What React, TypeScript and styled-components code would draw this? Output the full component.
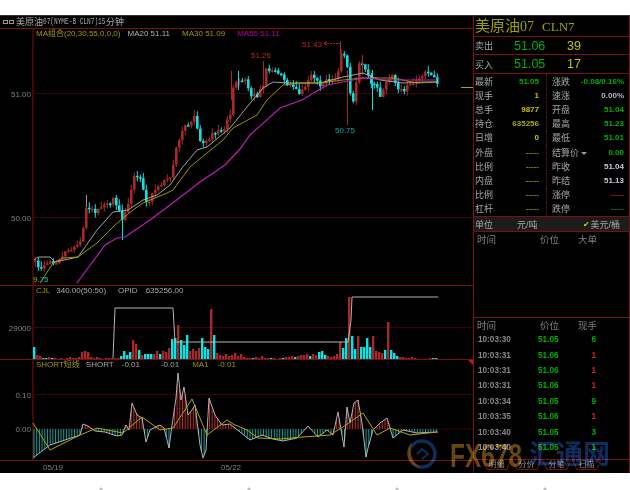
import React from "react";
import styled, { createGlobalStyle } from "styled-components";

const sans = `"Liberation Sans", "Noto Sans CJK SC", sans-serif`;
const lineRed = "#7c1010";
const dimRed = "#3c0505";
const olive = "#9c9c00";
const gray = "#a8a8a8";
const green = "#00b000";
const yellow = "#c4c400";

type Pt = [number, number];

const pricePath: Pt[] = [
  [34, 262], [40, 268], [45, 265], [52, 262], [60, 260], [65, 252], [72, 250], [80, 243],
  [82, 230], [84, 208], [95, 212], [105, 205], [112, 200], [118, 211], [122, 221], [128, 202],
  [132, 178], [140, 180], [146, 205], [155, 188], [165, 178], [170, 176], [174, 150], [180, 132],
  [193, 118], [200, 145], [210, 135], [222, 130], [229, 115], [231, 88], [236, 80], [245, 80],
  [250, 95], [255, 97], [262, 85], [263, 67], [270, 72], [275, 70], [280, 75], [285, 85],
  [292, 85], [298, 95], [305, 85], [310, 75], [318, 85], [325, 80], [335, 80], [340, 52],
  [345, 55], [348, 90], [352, 100], [358, 65], [362, 62], [368, 80], [375, 85], [380, 100],
  [385, 80], [392, 76], [395, 88], [402, 92], [408, 85], [415, 80], [422, 76], [428, 70],
  [435, 82], [438, 86],
];

const ma20: Pt[] = [
  [34, 260], [38, 257], [50, 257], [55, 262], [78, 257], [97, 230], [113, 212], [128, 210],
  [143, 200], [157, 195], [170, 185], [182, 168], [197, 150], [207, 147], [230, 128], [247, 107],
  [263, 88], [273, 82], [287, 83], [320, 83], [343, 77], [363, 73], [380, 80], [403, 83],
  [427, 82], [437, 82],
];

const ma30: Pt[] = [
  [40, 283], [53, 263], [63, 258], [78, 257], [97, 243], [115, 225], [133, 210], [143, 203],
  [167, 193], [173, 190], [190, 167], [207, 153], [223, 140], [233, 128], [257, 115], [267, 100],
  [283, 85], [300, 83], [320, 83], [343, 80], [363, 78], [393, 78], [417, 83], [437, 82],
];

const ma55: Pt[] = [
  [77, 283], [105, 245], [117, 238], [125, 237], [150, 220], [170, 205], [200, 182], [225, 165],
  [240, 149], [250, 135], [280, 108], [302, 100], [327, 85], [343, 82], [363, 78], [387, 80],
  [410, 80], [437, 80],
];

const macd: Pt[] = [
  [33, 458], [42, 451], [50, 445], [80, 435], [83, 424], [88, 426], [95, 431], [105, 432],
  [117, 436], [122, 435], [126, 425], [129, 430], [132, 403], [137, 415], [142, 418], [146, 442],
  [150, 430], [155, 427], [160, 425], [164, 428], [169, 448], [172, 425], [176, 398], [178, 373],
  [181, 400], [184, 387], [188, 415], [192, 410], [195, 405], [200, 445], [203, 458], [206, 450],
  [209, 398], [215, 415], [222, 425], [230, 424], [250, 440], [262, 435], [273, 439], [283, 441],
  [297, 438], [308, 426], [318, 437], [327, 430], [333, 435], [338, 412], [344, 447], [347, 407],
  [350, 423], [354, 403], [358, 400], [362, 423], [366, 457], [368, 448], [373, 430], [380, 423],
  [387, 418], [393, 438], [403, 430], [417, 433], [438, 432],
];

const macdSignal: Pt[] = [
  [33, 423], [50, 450], [80, 435], [97, 428], [123, 433], [142, 417], [160, 430], [173, 428],
  [192, 399], [207, 435], [227, 420], [233, 424], [247, 430], [258, 438], [280, 439], [303, 437],
  [330, 435], [343, 427], [363, 413], [377, 435], [390, 428], [410, 435], [437, 432],
];

// volume per 3px slot from x=33: positive is a red bar, negative a cyan one
const volumes = [
  -12, 4, 3, -1, -1, 2, -1, 1, 0, 1,
  0, 1, 2, 1, 1, 2, 7, 8, 7, 2,
  1, 2, 1, 0, 1, 1, 1, 1, 1, -3,
  -8, -4, -7, 19, 15, -9, 4, -5, -5, -5,
  5, 8, -5, 8, 7, 11, -20, -21, 34, -19,
  -14, -24, 8, 10, 8, 11, -21, -12, -10, 50,
  -24, 6, 4, 3, 5, 3, 4, 6, 3, 5,
  2, 1, 1, -1, 2, 1, 3, 1, 1, -1,
  1, 0, 1, -1, 2, 2, 3, -2, 3, 4,
  4, 5, -3, 5, 4, -7, -8, -4, 3, 2,
  3, 5, 17, -11, -21, 62, -23, -10, 23, -12,
  -12, -21, -12, 23, 8, 7, 6, -9, 37, -9,
  -6, -3, 2, 2, 1, 1, 2, 1, 0, 0,
  0, 0, 1, -1, -1, 0,
];

const wicks: [number, number, number, string][] = [
  [340, 41, 70, "#a82828"],
  [347, 70, 125, "#a82828"],
  [263, 61, 80, "#a82828"],
  [231, 71, 100, "#a82828"],
  [238, 71, 90, "#10e0e0"],
  [122, 212, 240, "#10e0e0"],
  [86, 195, 207, "#999999"],
  [372, 70, 110, "#10e0e0"],
  [362, 55, 75, "#a82828"],
];

const stats: [string, string, string, string, string, string][] = [
  ["最新", "51.05", green, "涨跌", "-0.08/0.16%", green],
  ["现手", "1", yellow, "速涨", "0.00%", "#b8b8d0"],
  ["总手", "9877", yellow, "开盘", "51.04", green],
  ["持仓", "635256", "#a8a800", "最高", "51.23", green],
  ["日增", "0", yellow, "最低", "51.01", green],
  ["外盘", "-----", "#8c8c00", "结算价", "0.00", green],
  ["比例", "-----", "#8c8c00", "昨收", "51.04", "#c8c8d8"],
  ["内盘", "-----", "#8c8c00", "昨结", "51.13", "#c8c8d8"],
  ["比例", "-----", "#8c8c00", "涨停", "-----", "#b02020"],
  ["杠杆", "-----", "#8c8c00", "跌停", "-----", "#008c00"],
];

const trades: [string, string, string, string][] = [
  ["10:03:30", "51.05", "6", green],
  ["10:03:31", "51.06", "1", "#d02020"],
  ["10:03:31", "51.06", "1", "#d02020"],
  ["10:03:31", "51.06", "1", "#d02020"],
  ["10:03:34", "51.05", "9", green],
  ["10:03:35", "51.06", "1", "#d02020"],
  ["10:03:40", "51.05", "3", green],
  ["10:03:40", "51.05", "1", green],
];

const interp = (pts: Pt[], x: number) => {
  for (let i = 1; i < pts.length; i++) {
    if (x <= pts[i][0]) {
      const [x0, y0] = pts[i - 1];
      const [x1, y1] = pts[i];
      return y0 + ((y1 - y0) * (x - x0)) / (x1 - x0 || 1);
    }
  }
  return pts[pts.length - 1][1];
};

const noise = (n: number) => {
  const v = Math.sin(n * 12.9898) * 43758.5453;
  return v - Math.floor(v);
};

const line = (pts: Pt[]) => pts.map((p) => p.join(",")).join(" ");

const buildCandles = () => {
  const out = [];
  let prev = pricePath[0][1];
  for (let x = 34; x <= 438; x += 3) {
    const close = interp(pricePath, x) + (noise(x) - 0.5) * 5;
    const up = close < prev;
    out.push({
      x,
      top: Math.min(prev, close),
      bottom: Math.max(prev, close),
      high: Math.min(prev, close) - noise(x + 1) * 6,
      low: Math.max(prev, close) + noise(x + 2) * 5,
      color: up ? "#a82828" : "#10e0e0",
    });
    prev = close;
  }
  return out;
};

const GlobalStyle = createGlobalStyle`
  html, body {
    margin: 0;
    padding: 0;
    background: #fff;
  }
  * {
    box-sizing: border-box;
  }
`;

const Page = styled.div`
  width: 630px;
  height: 490px;
  overflow: hidden;
  display: flex;
  flex-direction: column;
  font-family: ${sans};
`;

const TopGap = styled.div`
  height: 15px;
  background: #fff;
`;

const Terminal = styled.div`
  position: relative;
  height: 458px;
  display: flex;
  background: #000;
  border-top: 1px solid #333;
  overflow: hidden;
`;

const ChartColumn = styled.div`
  width: 473px;
  display: flex;
  flex-direction: column;
`;

const TitleBar = styled.div`
  height: 13px;
  display: flex;
  align-items: center;
  padding-left: 3px;
  color: ${gray};
  border-bottom: 1px solid ${lineRed};
  line-height: 12px;
`;

const WindowIcon = styled.span`
  width: 5px;
  height: 4px;
  margin-right: 1px;
  border: 1px solid #999;

  & + & {
    margin-right: 2px;
  }
`;

const TitleName = styled.span`
  font-size: 9px;
`;

const TitleCode = styled.span`
  width: 63px;
  font-family: "Liberation Mono", monospace;
  font-size: 9px;
  white-space: nowrap;
  transform: scaleX(0.68);
  transform-origin: left center;
`;

const Pane = styled.div<{ $height: number; $line?: boolean }>`
  position: relative;
  height: ${(p) => p.$height}px;
  border-bottom: ${(p) => (p.$line ? `1px solid ${lineRed}` : "none")};
`;

const Legend = styled.div`
  position: absolute;
  top: 0;
  left: 36px;
  display: flex;
  height: 10px;
  align-items: center;
  font-size: 8px;
  line-height: 10px;
  white-space: nowrap;
`;

const LegendItem = styled.span<{ $color: string; $left?: number }>`
  color: ${(p) => p.$color};
  margin-left: ${(p) => p.$left ?? 0}px;
`;

const ChartSvg = styled.svg`
  display: block;
  filter: blur(0.3px);

  text {
    font-family: ${sans};
    font-size: 8px;
  }
`;

const DateAxis = styled.div`
  flex: 1;
  display: flex;
  align-items: center;
  padding-left: 43px;
  color: #808080;
  font-size: 8px;
`;

const DateLabel = styled.span<{ $left?: number }>`
  margin-left: ${(p) => p.$left ?? 0}px;
`;

const SidePanel = styled.div`
  width: 157px;
  display: flex;
  flex-direction: column;
  border-left: 1px solid ${lineRed};
  border-right: 1px solid ${lineRed};
`;

const PanelTitle = styled.div`
  height: 20px;
  display: flex;
  align-items: baseline;
  padding-left: 1px;
  color: #a0a000;
  font-family: "Liberation Serif", "Noto Sans CJK SC", serif;
  font-size: 15px;
  line-height: 20px;
  white-space: pre;
`;

const TitleLatin = styled.span<{ $size: number; $left?: number }>`
  font-size: ${(p) => p.$size}px;
  margin-left: ${(p) => p.$left ?? 0}px;
`;

const QuoteRow = styled.div<{ $height: number }>`
  height: ${(p) => p.$height}px;
  display: flex;
  align-items: center;
  padding-left: 1px;
  border-top: 1px solid ${lineRed};
`;

const QuoteLabel = styled.span`
  width: 39px;
  color: ${gray};
  font-size: 9px;
`;

const QuotePrice = styled.span`
  width: 53px;
  color: ${green};
  font-size: 12.5px;
`;

const QuoteSize = styled.span`
  color: ${yellow};
  font-size: 12.5px;
`;

const StatsBlock = styled.div`
  height: 143px;
  display: grid;
  grid-template-rows: repeat(10, 1fr);
  border-top: 1px solid ${lineRed};
`;

const StatsRow = styled.div`
  display: grid;
  grid-template-columns: 73px 1fr;
`;

const StatCell = styled.div<{ $side: "left" | "right" }>`
  display: flex;
  align-items: center;
  justify-content: space-between;
  padding: ${(p) => (p.$side === "left" ? "0 7px 0 1px" : "0 5px 0 5px")};
  border-right: ${(p) => (p.$side === "left" ? `1px dotted ${lineRed}` : "none")};
`;

const StatLabel = styled.span`
  color: ${gray};
  font-size: 9px;
`;

const Caret = styled.span`
  width: 0;
  height: 0;
  display: inline-block;
  margin-left: 2px;
  vertical-align: middle;
  border-left: 3px solid transparent;
  border-right: 3px solid transparent;
  border-top: 3px solid #999;
`;

const StatValue = styled.span<{ $color: string }>`
  color: ${(p) => p.$color};
  font-size: 8px;
  font-weight: 700;
`;

const UnitRow = styled.div`
  height: 16px;
  display: flex;
  align-items: center;
  padding: 0 5px 0 1px;
  background: #1c1c1c;
  color: ${gray};
  font-size: 9px;
  border-top: 1px solid ${lineRed};
  border-bottom: 1px solid ${lineRed};
`;

const UnitOption = styled.span<{ $left: number }>`
  margin-left: ${(p) => p.$left}px;
`;

const CheckMark = styled.span`
  margin-left: 45px;
  margin-right: 1px;
  color: ${yellow};
  font-size: 8px;
`;

const TapeBox = styled.div<{ $height: number }>`
  height: ${(p) => p.$height}px;
  border-bottom: 1px solid ${lineRed};
`;

const TapeHeader = styled.div`
  display: grid;
  grid-template-columns: 63px 38px 38px;
  height: 14px;
  align-items: center;
  padding-left: 3px;
  color: #808080;
  font-size: 9.5px;
`;

const TapeRow = styled.div`
  display: grid;
  grid-template-columns: 60px 36px 22px;
  height: 15.4px;
  align-items: center;
  padding-left: 4px;
  font-size: 8.2px;
  font-weight: 700;
`;

const TapeTime = styled.span`
  color: #888;
`;

const TapePrice = styled.span`
  color: ${green};
`;

const TapeSize = styled.span<{ $color: string }>`
  color: ${(p) => p.$color};
  text-align: right;
`;

const TabBar = styled.div`
  height: 12px;
  display: flex;
  padding-left: 8px;
  gap: 1px;
`;

const Tab = styled.div`
  position: relative;
  width: 29px;
  height: 11px;
  color: #8a8a8a;
  font-size: 8px;
  line-height: 10px;
  text-align: center;
`;

const TabEdge = styled.svg`
  position: absolute;
  left: 0;
  top: 0;
`;

const Watermark = styled.div`
  position: absolute;
  left: 404px;
  bottom: 1px;
  display: flex;
  align-items: center;
  mix-blend-mode: screen;
  pointer-events: none;
`;

const MarkBrand = styled.span`
  width: 79px;
  margin-left: 12px;
  color: #644810;
  font-size: 34px;
  font-weight: 700;
  line-height: 34px;
  transform: scaleX(0.72);
  transform-origin: left center;
`;

const MarkName = styled.span`
  color: #0e2c5c;
  font-size: 27px;
  font-weight: 700;
  line-height: 34px;
`;

const FootMarks = styled.div`
  flex: 1;
  display: flex;
  align-items: flex-end;
  padding: 0 0 0 99px;
  gap: 144px;
  background: #fff;
`;

const FootMark = styled.span`
  width: 0;
  height: 0;
  border-left: 2px solid transparent;
  border-right: 2px solid transparent;
  border-bottom: 3px solid #bbb;
`;

const PricePane = () => {
  const candles = buildCandles();
  return (
    <ChartSvg width={473} height={256} viewBox="0 29 473 256">
      <line x1={33} y1={29} x2={33} y2={285} stroke={lineRed} />
      <line x1={34} y1={93.5} x2={473} y2={93.5} stroke={dimRed} />
      <line x1={34} y1={217.5} x2={473} y2={217.5} stroke={dimRed} />
      <text x={31} y={96.5} textAnchor="end" fill="#808080">51.00</text>
      <text x={31} y={220.5} textAnchor="end" fill="#808080">50.00</text>
      {candles.map((c) => (
        <g key={c.x} fill={c.color} stroke="none">
          <rect x={c.x + 0.8} y={c.high} width={1} height={c.low - c.high} />
          <rect x={c.x} y={c.top} width={2.6} height={Math.max(1.5, c.bottom - c.top)} />
        </g>
      ))}
      {wicks.map(([x, y1, y2, color]) => (
        <line key={x} x1={x + 0.5} y1={y1} x2={x + 0.5} y2={y2} stroke={color} />
      ))}
      <polyline points={line(ma20)} fill="none" stroke="#b4b4b4" strokeWidth={0.9} />
      <polyline points={line(ma30)} fill="none" stroke="#a8a400" strokeWidth={0.9} />
      <polyline points={line(ma55)} fill="none" stroke="#b820b8" strokeWidth={1.2} />
      <text x={251} y={58} fill="#c02828">51.26</text>
      <text x={302} y={47} fill="#c02828">51.43</text>
      <line x1={324} y1={43.5} x2={340} y2={43.5} stroke="#a82828" strokeDasharray="2 1" />
      <path d="M327 41.5 L324 43.5 L327 45.5" fill="none" stroke="#a82828" />
      <text x={335} y={133} fill="#10a8a8">50.75</text>
      <text x={33} y={282}>
        <tspan fill="#a8b000">9.</tspan>
        <tspan fill="#10c8c8">75</tspan>
      </text>
      <line x1={461} y1={87.5} x2={473} y2={87.5} stroke="#a8a400" />
    </ChartSvg>
  );
};

const VolumePane = () => (
  <ChartSvg width={473} height={73} viewBox="0 286 473 73">
    <line x1={33} y1={286} x2={33} y2={359} stroke={lineRed} />
    <line x1={34} y1={327.5} x2={473} y2={327.5} stroke={dimRed} />
    <text x={31} y={330.5} textAnchor="end" fill="#808080">29000</text>
    {volumes.map((v, i) =>
      v === 0 ? null : (
        <rect
          key={i}
          x={33 + i * 3}
          y={359 - Math.abs(v)}
          width={2.4}
          height={Math.abs(v)}
          fill={v > 0 ? "#a82828" : "#00e8e8"}
        />
      )
    )}
    <polyline
      points="113,358 115,308 173,308 175,342 348,342 351,320 352,297 438,297"
      fill="none"
      stroke="#b4b4b4"
    />
  </ChartSvg>
);

const MacdPane = () => {
  const bars = [];
  for (let x = 34; x <= 438; x += 2.7) {
    bars.push({ x, y: interp(macd, x) });
  }
  return (
    <ChartSvg width={473} height={100} viewBox="0 360 473 100">
      <line x1={33} y1={360} x2={33} y2={460} stroke={lineRed} />
      <line x1={34} y1={394.5} x2={473} y2={394.5} stroke={dimRed} />
      <line x1={34} y1={429} x2={473} y2={429} stroke={dimRed} />
      <text x={31} y={397.5} textAnchor="end" fill="#808080">0.10</text>
      <text x={31} y={432} textAnchor="end" fill="#808080">0.00</text>
      {bars.map((b) => (
        <line
          key={b.x}
          x1={b.x}
          y1={429}
          x2={b.x}
          y2={b.y}
          stroke={b.y < 429 ? "#b82c2c" : "#10a0a0"}
        />
      ))}
      <polyline points={line(macd)} fill="none" stroke="#c4c4c4" strokeWidth={0.9} />
      <polyline points={line(macdSignal)} fill="none" stroke="#b0a800" />
      <path d="M468 360 H473 V365 Z" fill="#c01818" />
    </ChartSvg>
  );
};

const App = () => {
  return (
    <Page>
      <GlobalStyle />
      <TopGap />
      <Terminal>
        <ChartColumn>
          <TitleBar>
            <WindowIcon />
            <WindowIcon />
            <TitleName>美原油</TitleName>
            <TitleCode>07(NYME-B CLN7)15</TitleCode>
            <TitleName>分钟</TitleName>
          </TitleBar>
          <Pane $height={257} $line>
            <PricePane />
            <Legend>
              <LegendItem $color={olive}>MA组合(20,30,55,0,0,0)</LegendItem>
              <LegendItem $color="#b4b4b4" $left={7}>MA20 51.11</LegendItem>
              <LegendItem $color={olive} $left={12}>MA30 51.09</LegendItem>
              <LegendItem $color="#b000b0" $left={12}>MA55 51.11</LegendItem>
            </Legend>
          </Pane>
          <Pane $height={74} $line>
            <VolumePane />
            <Legend>
              <LegendItem $color={olive}>CJL</LegendItem>
              <LegendItem $color={gray} $left={6}>340.00(50:50)</LegendItem>
              <LegendItem $color={gray} $left={12}>OPID</LegendItem>
              <LegendItem $color={gray} $left={8}>635256.00</LegendItem>
            </Legend>
          </Pane>
          <Pane $height={101} $line>
            <MacdPane />
            <Legend>
              <LegendItem $color={olive}>SHORT短线</LegendItem>
              <LegendItem $color={gray} $left={6}>SHORT</LegendItem>
              <LegendItem $color={gray} $left={8}>-0.01</LegendItem>
              <LegendItem $color={gray} $left={21}>-0.01</LegendItem>
              <LegendItem $color={olive} $left={13}>MA1</LegendItem>
              <LegendItem $color={olive} $left={9}>-0.01</LegendItem>
            </Legend>
          </Pane>
          <DateAxis>
            <DateLabel>05/19</DateLabel>
            <DateLabel $left={158}>05/22</DateLabel>
          </DateAxis>
        </ChartColumn>
        <SidePanel>
          <PanelTitle>
            美原油
            <TitleLatin $size={14}>07</TitleLatin>
            <TitleLatin $size={13} $left={8}>CLN7</TitleLatin>
          </PanelTitle>
          <QuoteRow $height={18}>
            <QuoteLabel>卖出</QuoteLabel>
            <QuotePrice>51.06</QuotePrice>
            <QuoteSize>39</QuoteSize>
          </QuoteRow>
          <QuoteRow $height={19}>
            <QuoteLabel>买入</QuoteLabel>
            <QuotePrice>51.05</QuotePrice>
            <QuoteSize>17</QuoteSize>
          </QuoteRow>
          <StatsBlock>
            {stats.map(([l, lv, lc, r, rv, rc], i) => (
              <StatsRow key={i}>
                <StatCell $side="left">
                  <StatLabel>{l}</StatLabel>
                  <StatValue $color={lc}>{lv}</StatValue>
                </StatCell>
                <StatCell $side="right">
                  <StatLabel>
                    {r}
                    {r === "结算价" && <Caret />}
                  </StatLabel>
                  <StatValue $color={rc}>{rv}</StatValue>
                </StatCell>
              </StatsRow>
            ))}
          </StatsBlock>
          <UnitRow>
            <span>单位</span>
            <UnitOption $left={24}>元/吨</UnitOption>
            <CheckMark>✔</CheckMark>
            <span>美元/桶</span>
          </UnitRow>
          <TapeBox $height={86}>
            <TapeHeader>
              <span>时间</span>
              <span>价位</span>
              <span>大单</span>
            </TapeHeader>
          </TapeBox>
          <TapeBox $height={142}>
            <TapeHeader>
              <span>时间</span>
              <span>价位</span>
              <span>现手</span>
            </TapeHeader>
            {trades.map(([time, price, size, color], i) => (
              <TapeRow key={i}>
                <TapeTime>{time}</TapeTime>
                <TapePrice>{price}</TapePrice>
                <TapeSize $color={color}>{size}</TapeSize>
              </TapeRow>
            ))}
          </TapeBox>
          <TabBar>
            {["明细", "分价", "分笔", "扫描"].map((name) => (
              <Tab key={name}>
                <TabEdge width={29} height={11}>
                  <path d="M0.5 0 L5 9.5 H25 L28.5 0" fill="none" stroke={lineRed} />
                </TabEdge>
                {name}
              </Tab>
            ))}
          </TabBar>
        </SidePanel>
        <Watermark>
          <svg width={34} height={34} viewBox="0 0 34 34">
            <circle cx={18} cy={16} r={13} fill="none" stroke="#0e2c5c" strokeWidth={3.5} />
            <path d="M8 4 C0 12 2 28 18 30 C8 26 4 14 8 4 Z" fill="#70400f" />
            <path d="M13 16 L18 11 L24 16 L18 21" fill="none" stroke="#0e2c5c" strokeWidth={2} />
          </svg>
          <MarkBrand>FX678</MarkBrand>
          <MarkName>汇通网</MarkName>
        </Watermark>
      </Terminal>
      <FootMarks>
        <FootMark />
        <FootMark />
        <FootMark />
        <FootMark />
      </FootMarks>
    </Page>
  );
};

export default App;
